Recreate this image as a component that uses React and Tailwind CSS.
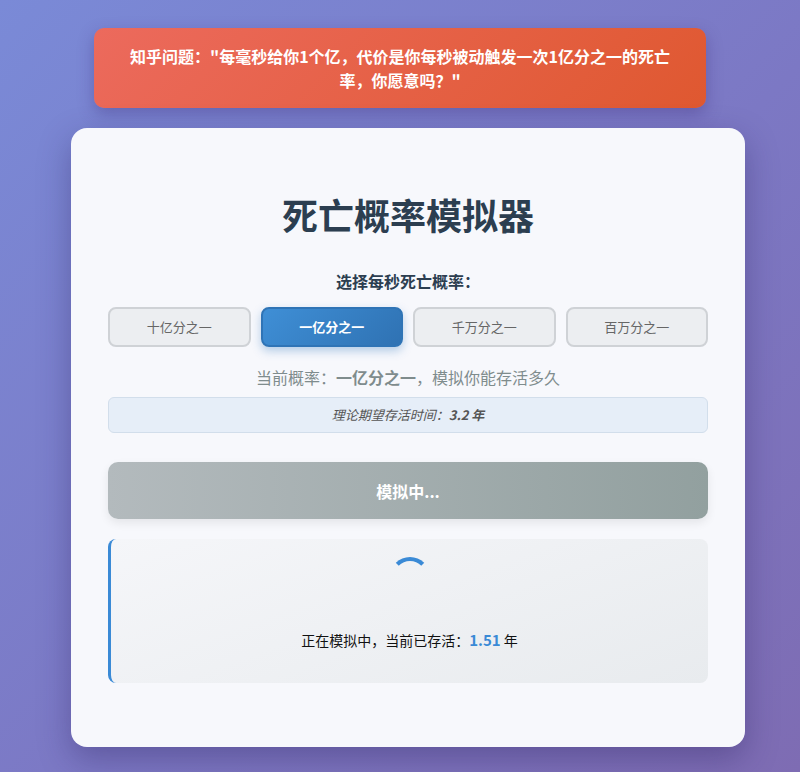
import React from 'react';

const options = ['十亿分之一', '一亿分之一', '千万分之一', '百万分之一'];

const App = () => {
  const selected = 1;

  return (
    <div
      className="min-h-[772px] w-full bg-[linear-gradient(135deg,#7a8ad7_0%,#7c78c4_55%,#7e6cb3_100%)] pt-7"
      style={{ fontFamily: '"Noto Sans CJK SC", "Noto Sans", sans-serif' }}
    >
      {/* Banner */}
      <div className="mx-auto w-[612px] rounded-[10px] bg-[linear-gradient(135deg,#ec6a5d,#df5830)] px-5 py-4 text-center text-[16px] font-bold leading-6 text-white shadow-[0_6px_16px_rgba(60,40,120,0.35)]">
        知乎问题："每毫秒给你1个亿，代价是你每秒被动触发一次1亿分之一的死亡率，你愿意吗？"
      </div>

      {/* Card */}
      <div className="ml-[71px] mt-5 w-[674px] rounded-2xl bg-[#f7f8fc] px-[37px] pb-16 pt-[62px] shadow-[0_12px_32px_rgba(40,30,90,0.35)]">
        <h1 className="text-center text-[36px] font-bold leading-[48px] text-[#2c3e50]">死亡概率模拟器</h1>

        <p className="mt-[31px] text-center text-[16px] font-bold leading-6 text-[#2c3e50]">选择每秒死亡概率：</p>

        <div className="mt-[14px] grid grid-cols-4 gap-[10px]">
          {options.map((o, i) =>
            i === selected ? (
              <button
                key={o}
                className="h-10 rounded-lg border-2 border-[#2f74b6] bg-[linear-gradient(135deg,#3f8fd6,#2f72b3)] text-[13px] font-bold text-white shadow-[0_4px_10px_rgba(52,120,190,0.35)]"
              >
                {o}
              </button>
            ) : (
              <button
                key={o}
                className="h-10 rounded-lg border-2 border-[#cfd2d6] bg-[#eceef1] text-[13px] text-[#666]"
              >
                {o}
              </button>
            )
          )}
        </div>

        <p className="mt-[18px] text-center text-[16px] leading-6 text-[#7f8c8d]">
          当前概率：<span className="font-bold">一亿分之一</span>，模拟你能存活多久
        </p>

        <div className="mt-2 flex h-9 items-center justify-center rounded-md border border-[#d2deeb] bg-[#e6eef8] text-[13px] italic text-[#555]">
          理论期望存活时间：<span className="font-bold">3.2 年</span>
        </div>

        <button className="mt-[29px] flex h-[57px] w-full items-center justify-center rounded-[10px] bg-[linear-gradient(90deg,#b3babd,#92a09f)] text-[16px] font-bold text-white shadow-[0_4px_10px_rgba(0,0,0,0.08)]">
          模拟中...
        </button>

        <div className="mt-5 flex h-[144px] flex-col items-center rounded-lg border-l-[3px] border-[#3a8ad6] bg-[linear-gradient(160deg,#f5f6f9,#e8ebee)] pt-[18px]">
          <div className="h-10 w-10 rounded-full border-4 border-transparent border-t-[#3a8ad6]" />
          <p className="mt-[32px] text-[14px] text-[#111]">
            正在模拟中，当前已存活：<span className="text-[15px] font-bold text-[#3a8ad6]">1.51</span> 年
          </p>
        </div>
      </div>
    </div>
  );
};

export default App;
